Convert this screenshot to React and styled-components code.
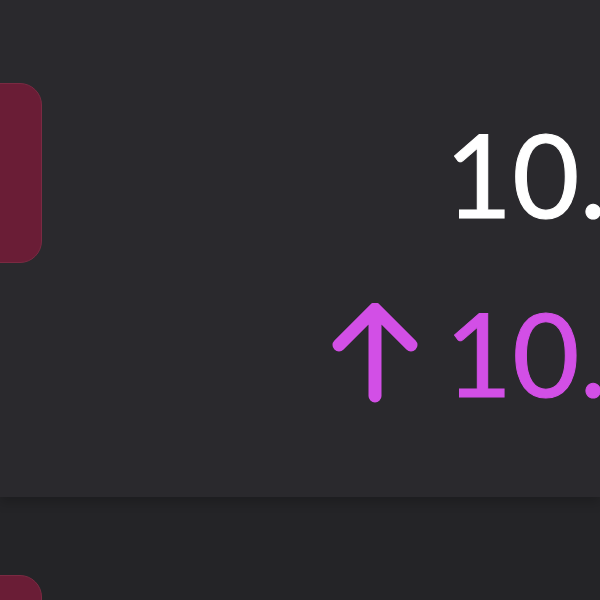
import React from 'react';
import styled, { createGlobalStyle } from 'styled-components';

const GlobalStyle = createGlobalStyle`
  html, body {
    margin: 0;
    padding: 0;
    background: #242427;
  }
`;

const Page = styled.div`
  width: 600px;
  height: 600px;
  overflow: hidden;
  background: #242427;
  font-family: Lato, 'DejaVu Sans', sans-serif;
`;

const Row = styled.div`
  display: flex;
  align-items: flex-start;
  height: ${(p) => (p.active ? '497px' : '420px')};
  padding-top: ${(p) => (p.active ? '83px' : '78px')};
  box-sizing: border-box;
  background: ${(p) => (p.active ? '#2a292d' : '#242427')};
  box-shadow: ${(p) => (p.active ? '0 6px 10px rgba(0, 0, 0, 0.18)' : 'none')};
  position: relative;
  z-index: ${(p) => (p.active ? 1 : 0)};
`;

const Icon = styled.div`
  flex-shrink: 0;
  width: 180px;
  height: 180px;
  margin-left: -138px;
  border-radius: 22px;
  background: #6a1d36;
  border: 1px solid #7a2a42;
  box-sizing: border-box;
`;

const Values = styled.div`
  flex-shrink: 0;
  display: grid;
  grid-template-columns: 86px max-content;
  column-gap: 27px;
  row-gap: 63px;
  margin-left: 290px;
  margin-top: 33px;
  white-space: nowrap;
`;

const Amount = styled.span`
  grid-column: 2;
  font-size: 116px;
  line-height: 1;
  color: ${(p) => p.color};
  -webkit-text-stroke: 1px ${(p) => p.color};
`;

const Arrow = styled.svg`
  grid-column: 1;
  align-self: center;
  display: block;
`;

const App = () => {
  return (
    <>
      <GlobalStyle />
      <Page>
        <Row active>
          <Icon />
          <Values>
            <Amount color='#ffffff'>10.58</Amount>
            <Arrow width='86' height='100' viewBox='0 0 86 100'>
              <path
                d='M7 42 L43 6 L79 42 M43 6 L43 93'
                fill='none'
                stroke='#d24fe6'
                strokeWidth='13'
                strokeLinecap='round'
                strokeLinejoin='round'
              />
            </Arrow>
            <Amount color='#d24fe6'>10.2%</Amount>
          </Values>
        </Row>
        <Row>
          <Icon />
        </Row>
      </Page>
    </>
  );
};

export default App;
